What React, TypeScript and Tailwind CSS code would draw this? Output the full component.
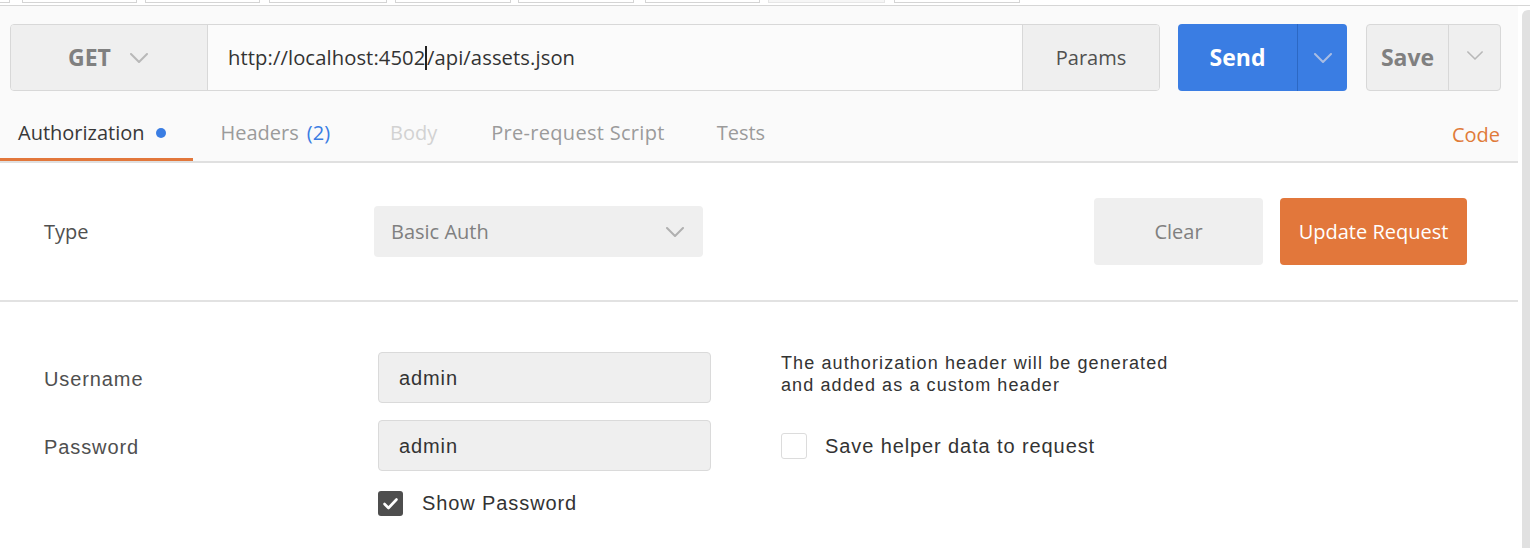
import React from "react";

const Chevron = ({ color = "#b3b3b3", w = 18, h = 10, sw = 2 }: { color?: string; w?: number; h?: number; sw?: number }) => (
  <svg width={w} height={h} viewBox="0 0 18 10" className="block">
    <polyline points="1,1 9,9 17,1" fill="none" stroke={color} strokeWidth={sw} strokeLinecap="round" strokeLinejoin="round" />
  </svg>
);

const topTabs = [
  { cls: "ml-[12px] w-[115px]", active: false },
  { cls: "ml-[8px] w-[115px]", active: false },
  { cls: "ml-[9px] w-[118px]", active: false },
  { cls: "ml-[8px] w-[116px]", active: false },
  { cls: "ml-[7px] w-[116px]", active: false },
  { cls: "ml-[11px] w-[115px]", active: false },
  { cls: "ml-[8px] w-[117px]", active: true },
  { cls: "ml-[9px] w-[126px]", active: false },
];

export default function App() {
  const os = { fontFamily: '"Open Sans", "Liberation Sans", sans-serif' };
  const hv = { fontFamily: '"Liberation Sans", Arial, sans-serif' };
  return (
    <div className="w-[1530px] h-[548px] overflow-hidden bg-white" style={os}>
      {/* top tab strip */}
      <div className="flex h-[6px] w-full items-start border-b border-[#d6d6d6] bg-white">
        <div className="h-[3px] w-[10px] border-b border-r border-[#d4d4d4]" />
        {topTabs.map((t, i) => (
          <div
            key={i}
            className={`${t.cls} h-[3px] border-x border-b ${t.active ? "border-[#e6e6e6] bg-[#f6f6f6]" : "border-[#d4d4d4] bg-white"}`}
          />
        ))}
      </div>

      <div className="flex">
        <div className="w-[1518px]">
          {/* request area */}
          <div className="bg-[#fafafa]">
            <div className="flex pl-[10px] pr-[17px] pt-[18px]">
              <div className="flex h-[67px] w-[1150px] overflow-hidden rounded-[4px] border border-[#d8d8d8]">
                <div className="flex w-[196px] items-center bg-[#efefef] pl-[57px]">
                  <span className="text-[23px] font-bold leading-none text-[#808080]">GET</span>
                  <span className="ml-[19px]"><Chevron color="#b8b8b8" /></span>
                </div>
                <div className="flex flex-1 items-center border-l border-[#d8d8d8] bg-[#fbfbfb] pl-[20px] text-[20.2px] tracking-[0.1px] text-[#333333]">
                  <span>http://localhost:4502</span>
                  <span className="inline-block h-[24px] w-[1.5px] bg-[#222]" />
                  <span>/api/assets.json</span>
                </div>
                <div className="flex w-[137px] items-center justify-center border-l border-[#d8d8d8] bg-[#efefef] text-[20px] text-[#505050]">
                  Params
                </div>
              </div>

              <div className="ml-[18px] flex h-[67px] w-[169px] overflow-hidden rounded-[4px] bg-[#3a7de3]">
                <div className="flex w-[119px] items-center justify-center text-[23px] font-bold text-white">Send</div>
                <div className="w-px bg-[#2c68c4]" />
                <div className="flex flex-1 items-center justify-center pt-[1px]">
                  <Chevron color="#a9bde3" />
                </div>
              </div>

              <div className="ml-[19px] flex h-[67px] w-[135px] overflow-hidden rounded-[4px] border border-[#d8d8d8] bg-[#efefef]">
                <div className="flex w-[81px] items-center justify-center text-[23px] font-bold text-[#808080]">Save</div>
                <div className="w-px bg-[#d8d8d8]" />
                <div className="flex flex-1 items-center justify-center pb-[4px]">
                  <Chevron color="#b8b8b8" w={16} h={9} sw={1.8} />
                </div>
              </div>
            </div>

            {/* tabs */}
            <div className="mt-[16px] flex items-end border-b-2 border-[#e0e0e0] text-[20px]">
              <div className="flex h-[54px] items-center border-b-[3px] border-[#e2773b] pl-[18px] pr-[27px] text-[#383838]">
                <span>Authorization</span>
                <span className="ml-[11px] h-[10px] w-[10px] rounded-full bg-[#3a7de3]" />
              </div>
              <div className="ml-[28px] flex h-[54px] items-center border-b-[3px] border-transparent text-[#9b9b9b]">
                <span>Headers</span>
                <span className="ml-[8px] text-[#3a7de3]">(2)</span>
              </div>
              <div className="ml-[60px] flex h-[54px] items-center border-b-[3px] border-transparent text-[#d2d2d2]">Body</div>
              <div className="ml-[54px] flex h-[54px] items-center border-b-[3px] border-transparent tracking-[0.3px] text-[#9b9b9b]">Pre-request Script</div>
              <div className="ml-[52px] flex h-[54px] items-center border-b-[3px] border-transparent text-[#9b9b9b]">Tests</div>
              <div className="ml-auto flex h-[54px] items-center border-b-[3px] border-transparent pr-[18px] pt-[4px] text-[#e07b39]">Code</div>
            </div>
          </div>

          {/* type section */}
          <div className="flex items-center border-b-2 border-[#e2e2e2] pb-[35px] pt-[35px] pr-[51px]">
            <div className="w-[374px] pl-[44px] text-[20px] text-[#505050]">Type</div>
            <div className="flex h-[51px] w-[329px] items-center justify-between rounded-[4px] bg-[#efefef] pl-[17px] pr-[19px]">
              <span className="text-[20px] text-[#808080]">Basic Auth</span>
              <Chevron color="#b0b0b0" />
            </div>
            <div className="ml-auto flex h-[67px] w-[169px] items-center justify-center rounded-[4px] bg-[#efefef] text-[20px] text-[#808080]">
              Clear
            </div>
            <div className="ml-[17px] flex h-[67px] w-[187px] items-center justify-center rounded-[4px] bg-[#e2773b] text-[20px] text-white">
              Update Request
            </div>
          </div>

          {/* credentials */}
          <div className="flex pt-[50px]" style={hv}>
            <div className="w-[378px] pl-[44px] text-[20px] tracking-[0.9px] text-[#4f4f4f]">
              <div className="flex h-[51px] items-center pt-[3px]">Username</div>
              <div className="mt-[17px] flex h-[51px] items-center pt-[3px]">Password</div>
            </div>
            <div className="w-[333px]">
              <div className="flex h-[51px] items-center rounded-[4px] border-[1.5px] border-[#dadada] bg-[#efefef] pl-[20px] text-[20px] tracking-[0.9px] text-[#333333]">
                admin
              </div>
              <div className="mt-[17px] flex h-[51px] items-center rounded-[4px] border-[1.5px] border-[#dadada] bg-[#efefef] pl-[20px] text-[20px] tracking-[0.9px] text-[#333333]">
                admin
              </div>
              <div className="mt-[17px] flex items-center">
                <div className="flex h-[25px] w-[25px] items-center justify-center rounded-[3px] bg-[#4e4e4e]">
                  <svg width="25" height="25" viewBox="0 0 25 25">
                    <polyline points="6.5,13 10.5,17 18.5,8.5" fill="none" stroke="#ffffff" strokeWidth="2.6" strokeLinecap="round" strokeLinejoin="round" />
                  </svg>
                </div>
                <span className="ml-[19px] text-[20px] tracking-[0.9px] text-[#333333]">Show Password</span>
              </div>
            </div>
            <div className="ml-[70px]">
              <div className="text-[18px] leading-[22px] tracking-[1.1px] text-[#333333]">
                <div>The authorization header will be generated</div>
                <div>and added as a custom header</div>
              </div>
              <div className="mt-[35px] flex items-center">
                <div className="h-[26px] w-[26px] rounded-[3px] border border-[#dcdcdc] bg-white" />
                <span className="ml-[18px] text-[20px] tracking-[0.9px] text-[#333333]">Save helper data to request</span>
              </div>
            </div>
          </div>
        </div>

        {/* scrollbar */}
        <div className="ml-[4px] mt-[4px] h-[540px] w-[8px] rounded-tl-[6px] bg-[#e1e1e1]" />
      </div>
    </div>
  );
}
